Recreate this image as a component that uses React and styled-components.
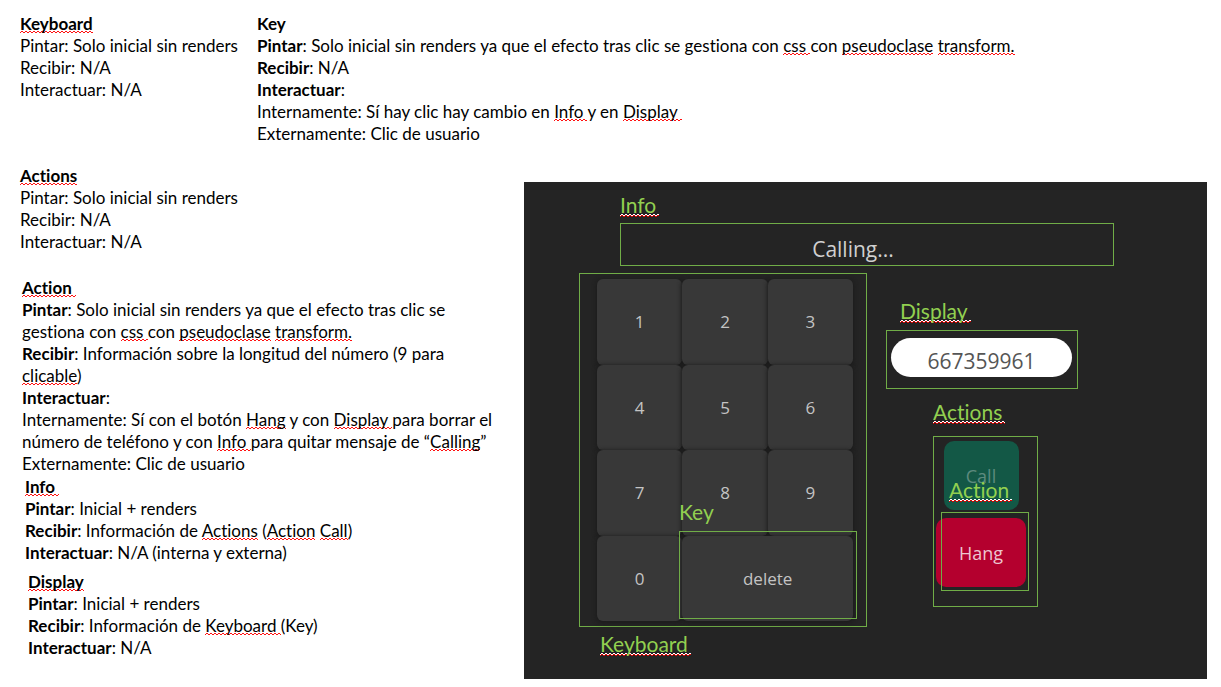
import React from "react";
import styled, { createGlobalStyle, css } from "styled-components";

const Global = createGlobalStyle`
  * { box-sizing: border-box; }
  body {
    margin: 0;
    background: #fff;
    color: #000;
    font-family: Lato, "Open Sans", sans-serif;
    font-variant-ligatures: none;
  }
  button, input { font-family: "Open Sans", "Noto Sans", sans-serif; }
`;

const zigzag = (strokes) => {
  const paths = strokes
    .map(([y, colour]) => `<path d='M-2 ${y - 2}L0 ${y}L2 ${y - 2}L4 ${y}L6 ${y - 2}' stroke='${colour}' fill='none'/>`)
    .join("");
  const svg = `<svg xmlns='http://www.w3.org/2000/svg' width='4' height='4' viewBox='0 0 4 4'>${paths}</svg>`;
  return css`
    background: url("data:image/svg+xml,${encodeURIComponent(svg).replace(/'/g, "%27")}") 0 100% / 4px 4px repeat-x;
  `;
};

const Misspelt = styled.span`
  white-space: pre-wrap;
  ${zigzag([[3, "#ff1010"]])}
`;

const Page = styled.main`
  padding: 13px 14px 8px 20px;
`;

const TopNotes = styled.div`
  display: flex;
  gap: 19px;
`;

const Middle = styled.div`
  display: flex;
  align-items: flex-start;
  margin-top: 20px;
`;

const NoteColumn = styled.div`
  flex: 0 0 504px;
`;

const Note = styled.section`
  margin: ${(p) => p.$top || 0}px 0 0 ${(p) => p.$indent || 0}px;
  font-size: 17px;
  line-height: 22px;
  h2, p { margin: 0; font-size: inherit; }
`;

const Screen = styled.section`
  flex: 1;
  margin-top: 17px;
  min-height: 497px;
  padding: 10px 93px 4px 55px;
  background: #242424;
`;

const Tag = styled.span`
  display: block;
  width: fit-content;
  margin: ${(p) => p.$top || 0}px 0 0 ${(p) => p.$indent || 0}px;
  padding-right: 3px;
  color: #92d050;
  font-size: 21px;
  line-height: 26px;
  ${(p) => p.$marked && zigzag([[2, "#ffffff"], [3, "#e00000"]])}
`;

const outline = "1px solid #70ad47";

const InfoArea = styled.div`
  margin-left: 41px;
`;

const InfoBox = styled.div`
  display: flex;
  align-items: center;
  justify-content: center;
  height: 43px;
  margin-top: 5px;
  padding: 8px 28px 0 0;
  border: ${outline};
  color: #d0d0d0;
  font: 21px/30px "Open Sans", sans-serif;
`;

const Phone = styled.div`
  display: flex;
  align-items: flex-start;
  gap: 19px;
  margin-top: 7px;
`;

const KeyboardBox = styled.div`
  position: relative;
  width: 288px;
  height: 354px;
  padding: 5px 13px 5px 17px;
  border: ${outline};
`;

const Keys = styled.div`
  display: grid;
  grid-template-columns: repeat(3, 1fr);
  grid-template-rows: repeat(4, 1fr);
  width: 256px;
  height: 342px;
`;

const Key = styled.button`
  grid-column: span ${(p) => p.$span || 1};
  border: 0;
  border-radius: 6px;
  background: #383838;
  box-shadow: 0 1px 4px 1px #1c1c1c;
  color: #c4c4c4;
  font-size: 17px;
`;

const KeyMarker = styled.div`
  position: absolute;
  left: 99px;
  top: 225px;
`;

const KeyFrame = styled.div`
  width: 178px;
  height: 88px;
  margin-top: 6px;
  border: ${outline};
`;

const Side = styled.div`
  padding-top: 25px;
`;

const DisplayBox = styled.div`
  width: 192px;
  height: 59px;
  margin-top: 6px;
  padding: 7px 4px;
  border: ${outline};
`;

const Display = styled.input`
  display: block;
  width: 181px;
  height: 39px;
  padding: 6px 0 0;
  border: 0;
  border-radius: 20px;
  background: #fff;
  color: #555;
  font-size: 21px;
  text-align: center;
`;

const ActionsArea = styled.div`
  margin: 10px 0 0 47px;
`;

const ActionsBox = styled.div`
  position: relative;
  display: flex;
  flex-direction: column;
  align-items: center;
  gap: 8px;
  width: 105px;
  height: 171px;
  margin-top: 11px;
  padding: 4px 9px 0 0;
  border: ${outline};
`;

const Action = styled.button`
  width: ${(p) => (p.$call ? 75 : 90)}px;
  height: 69px;
  border: 0;
  border-radius: 10px;
  background: ${(p) => (p.$call ? "#135846" : "#b4002e")};
  color: ${(p) => (p.$call ? "#5d8a7e" : "#edc5ce")};
  font-size: 18px;
`;

const ActionMarker = styled.div`
  position: absolute;
  left: 7px;
  top: 40px;
`;

const ActionFrame = styled.div`
  width: 88px;
  height: 79px;
  margin-top: 9px;
  border: ${outline};
`;

export default function App() {
  return (
    <Page>
      <Global />
      <TopNotes>
        <Note>
          <h2><Misspelt>Keyboard</Misspelt></h2>
          <p>Pintar: Solo inicial sin renders</p>
          <p>Recibir: N/A</p>
          <p>Interactuar: N/A</p>
        </Note>
        <Note>
          <h2>Key</h2>
          <p><b>Pintar</b>: Solo inicial sin renders ya que el efecto tras clic se gestiona con <Misspelt>css </Misspelt>con <Misspelt>pseudoclase</Misspelt> <Misspelt>transform.</Misspelt></p>
          <p><b>Recibir</b>: N/A</p>
          <p><b>Interactuar</b>:</p>
          <p>Internamente: Sí hay clic hay cambio en <Misspelt>Info </Misspelt>y en <Misspelt>Display </Misspelt></p>
          <p>Externamente: Clic de usuario</p>
        </Note>
      </TopNotes>
      <Middle>
        <NoteColumn>
          <Note>
            <h2><Misspelt>Actions</Misspelt></h2>
            <p>Pintar: Solo inicial sin renders</p>
            <p>Recibir: N/A</p>
            <p>Interactuar: N/A</p>
          </Note>
          <Note $top={24} $indent={2}>
            <h2><Misspelt>Action </Misspelt></h2>
            <p><b>Pintar</b>: Solo inicial sin renders ya que el efecto tras clic se<br />gestiona con <Misspelt>css </Misspelt>con <Misspelt>pseudoclase</Misspelt> <Misspelt>transform.</Misspelt></p>
            <p><b>Recibir</b>: Información sobre la longitud del número (9 para<br /><Misspelt>clicable</Misspelt>)</p>
            <p><b>Interactuar</b>:</p>
            <p>Internamente: Sí con el botón <Misspelt>Hang</Misspelt> y con <Misspelt>Display </Misspelt>para borrar el<br />número de teléfono y con <Misspelt>Info </Misspelt>para quitar mensaje de “<Misspelt>Calling</Misspelt>”</p>
            <p>Externamente: Clic de usuario</p>
          </Note>
          <Note $top={1} $indent={5}>
            <h2><Misspelt>Info </Misspelt></h2>
            <p><b>Pintar</b>: Inicial + renders</p>
            <p><b>Recibir</b>: Información de <Misspelt>Actions</Misspelt> (<Misspelt>Action</Misspelt> <Misspelt>Call</Misspelt>)</p>
            <p><b>Interactuar</b>: N/A (interna y externa)</p>
          </Note>
          <Note $top={7} $indent={8}>
            <h2><Misspelt>Display</Misspelt></h2>
            <p><b>Pintar</b>: Inicial + renders</p>
            <p><b>Recibir</b>: Información de <Misspelt>Keyboard </Misspelt>(Key)</p>
            <p><b>Interactuar</b>: N/A</p>
          </Note>
        </NoteColumn>
        <Screen>
          <InfoArea>
            <Tag $marked>Info</Tag>
            <InfoBox>Calling...</InfoBox>
          </InfoArea>
          <Phone>
            <div>
              <KeyboardBox>
                <Keys>
                  {["1", "2", "3", "4", "5", "6", "7", "8", "9", "0"].map((k) => (
                    <Key key={k} type="button">{k}</Key>
                  ))}
                  <Key type="button" $span={2}>delete</Key>
                </Keys>
                <KeyMarker>
                  <Tag>Key</Tag>
                  <KeyFrame />
                </KeyMarker>
              </KeyboardBox>
              <Tag $marked $top={4} $indent={21}>Keyboard</Tag>
            </div>
            <Side>
              <Tag as="label" htmlFor="number" $marked $indent={14}>Display</Tag>
              <DisplayBox>
                <Display id="number" type="text" defaultValue="667359961" />
              </DisplayBox>
              <ActionsArea>
                <Tag $marked>Actions</Tag>
                <ActionsBox>
                  <Action type="button" $call>Call</Action>
                  <Action type="button">Hang</Action>
                  <ActionMarker>
                    <Tag $marked $indent={8}>Action</Tag>
                    <ActionFrame />
                  </ActionMarker>
                </ActionsBox>
              </ActionsArea>
            </Side>
          </Phone>
        </Screen>
      </Middle>
    </Page>
  );
}
